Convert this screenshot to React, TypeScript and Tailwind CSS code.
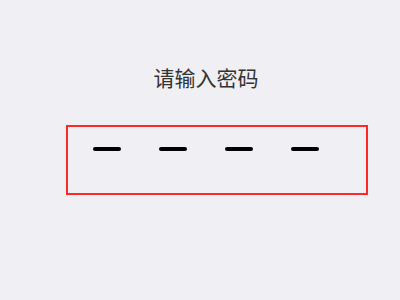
export default function App() {
  return (
    <div
      className="w-[400px] h-[300px] bg-[#efeff4] flex flex-col"
      style={{ fontFamily: '"Noto Sans CJK SC", "Noto Sans", sans-serif' }}
    >
      {/* Title */}
      <div className="pt-[65px] pl-[12px] text-center text-[21px] leading-[25px] text-[#333333]">
        请输入密码
      </div>

      {/* Password box */}
      <div className="ml-[66px] mt-[35px] w-[302px] h-[70px] border-2 border-[#ff2828] pl-[25px] pt-[20px]">
        <div className="flex gap-[38px]">
          {Array.from({ length: 4 }).map((_, i) => (
            <div key={i} className="w-[28px] h-[4px] rounded-full bg-black"></div>
          ))}
        </div>
      </div>
    </div>
  );
}
